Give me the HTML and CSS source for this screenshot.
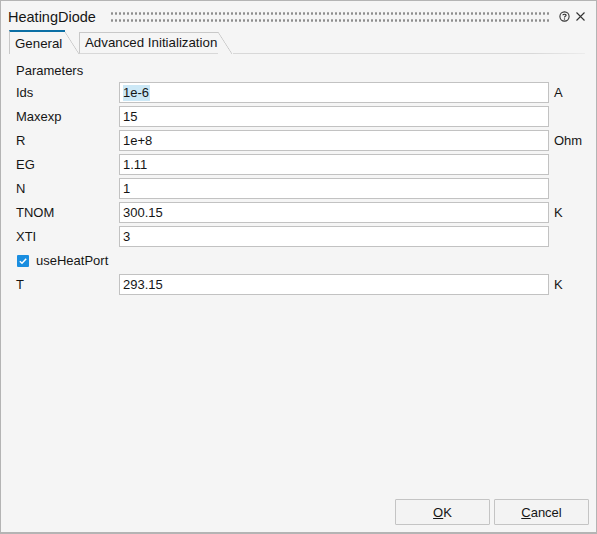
FILE: index.html
```html
<!DOCTYPE html>
<html>
<head>
<meta charset="utf-8">
<link rel="stylesheet" href="styles.css">
</head>
<body>
<div class="window">
  <div class="titlebar">
    <span class="title">HeatingDiode</span>
    <span class="grip"></span>
    <svg class="help" width="11" height="11" viewBox="0 0 11 11">
      <circle cx="5.5" cy="5.5" r="4.6" fill="none" stroke="#333" stroke-width="1.1"/>
      <path d="M3.9 4.3 C3.9 2.9 7.1 2.9 7.1 4.3 C7.1 5.3 5.5 5.3 5.5 6.4" fill="none" stroke="#333" stroke-width="1.1"/>
      <circle cx="5.5" cy="8" r="0.7" fill="#333"/>
    </svg>
    <svg class="close" width="11" height="11" viewBox="0 0 11 11">
      <path d="M1.5 1.5 L9.5 9.5 M9.5 1.5 L1.5 9.5" stroke="#333" stroke-width="1.1"/>
    </svg>
  </div>
  <div class="tabbar">
    <div class="tab active">General</div>
    <div class="tab">Advanced Initialization</div>
    <div class="tabline"></div>
  </div>
  <div class="panel">
    <div class="section">Parameters</div>
    <div class="form">
      <label>Ids</label><div class="field"><span class="sel">1e-6</span></div><span class="unit">A</span>
      <label>Maxexp</label><div class="field">15</div><span class="unit"></span>
      <label>R</label><div class="field">1e+8</div><span class="unit">Ohm</span>
      <label>EG</label><div class="field">1.11</div><span class="unit"></span>
      <label>N</label><div class="field">1</div><span class="unit"></span>
      <label>TNOM</label><div class="field">300.15</div><span class="unit">K</span>
      <label>XTI</label><div class="field">3</div><span class="unit"></span>
      <div class="check"><span class="box"><svg width="12" height="12" viewBox="0 0 12 12"><path d="M2.8 6.2 L5 8.2 L9.2 3.8" fill="none" stroke="#fff" stroke-width="1.5"/></svg></span>useHeatPort</div>
      <label>T</label><div class="field">293.15</div><span class="unit">K</span>
    </div>
  </div>
  <div class="footer">
    <button class="btn"><u>O</u>K</button>
    <button class="btn"><u>C</u>ancel</button>
  </div>
</div>
</body>
</html>
```
FILE: styles.css
```css
* { box-sizing: border-box; }
html, body { margin: 0; padding: 0; }
body {
  width: 597px;
  height: 534px;
  font-family: "Liberation Sans", Arial, sans-serif;
  font-size: 13px;
  color: #151515;
  background: #f5f5f5;
}
.window {
  width: 597px;
  height: 534px;
  border: 1px solid #b4b4b4;
  border-bottom-width: 2px;
  background: #f5f5f5;
  display: flex;
  flex-direction: column;
}
.titlebar {
  height: 29px;
  display: flex;
  align-items: center;
  padding: 2px 0 0 7px;
}
.title {
  font-size: 14.5px;
}
.grip {
  flex: 1;
  height: 14px;
  margin: 0 9px 0 14px;
  background-image: radial-gradient(circle at 2px 3.5px, #8e8e8e 1px, transparent 1.4px);
  background-size: 4px 7px;
  background-position: 0 0;
}
.help { margin-right: 5px; }
.close { margin-right: 10px; }
.tabbar {
  height: 24px;
  display: flex;
  align-items: flex-end;
  padding-left: 8px;
  position: relative;
}
.tab {
  position: relative;
  height: 22px;
  line-height: 20px;
  padding: 0 0 0 5px;
  border-left: 1px solid #c8c8c8;
  border-top: 1px solid #c8c8c8;
  margin-right: 15px;
  font-size: 13.3px;
  border-bottom: 1px solid #d8d8d8;
}
.tab::after {
  content: "";
  position: absolute;
  top: -1px;
  right: -14px;
  width: 14px;
  height: 22px;
  background: linear-gradient(to top right, transparent calc(50% - 0.7px), #c8c8c8 50%, transparent calc(50% + 0.7px));
}
.tab.active {
  height: 24px;
  line-height: 24px;
  border-top: 2px solid #0b6fa5;
  border-bottom: none;
  width: 56px;
  margin-right: 14px;
}
.tab.active::after {
  top: 0;
  height: 22px;
}
.tab:not(.active) {
  width: 139px;
}
.tabline {
  flex: 1;
  height: 1px;
  margin-right: 11px;
  background: linear-gradient(to right, #d8d8d8, #d8d8d8 85%, #ececec);
}
.panel {
  padding: 9px 0 0 15px;
}
.section {
  height: 19px;
  line-height: 16px;
}
.form {
  display: grid;
  grid-template-columns: 103px 430px auto;
  grid-auto-rows: 21px;
  row-gap: 3px;
  align-items: center;
}
.form label {
  line-height: 21px;
}
.field {
  height: 21px;
  background: #fff;
  border: 1px solid #c2c2c2;
  padding-left: 3px;
  line-height: 19px;
}
.sel {
  background: #cce8f6;
  display: inline-block;
  line-height: 16px;
  padding: 0 1px 0 0;
}
.unit {
  padding-left: 5px;
}
.check {
  grid-column: 1 / 4;
  display: flex;
  align-items: center;
  gap: 7px;
  padding-left: 1px;
}
.box {
  width: 12px;
  height: 12px;
  background: #1a8ee0;
  border-radius: 1px;
  display: inline-flex;
}
.footer {
  margin-top: auto;
  display: flex;
  justify-content: flex-end;
  gap: 4px;
  padding: 0 7px 7px 0;
}
.btn {
  width: 95px;
  height: 26px;
  background: #f3f3f3;
  border: 1px solid #c4c4c4;
  border-radius: 1px;
  font-family: "Liberation Sans", Arial, sans-serif;
  font-size: 13px;
  color: #151515;
  padding: 0;
}
```
